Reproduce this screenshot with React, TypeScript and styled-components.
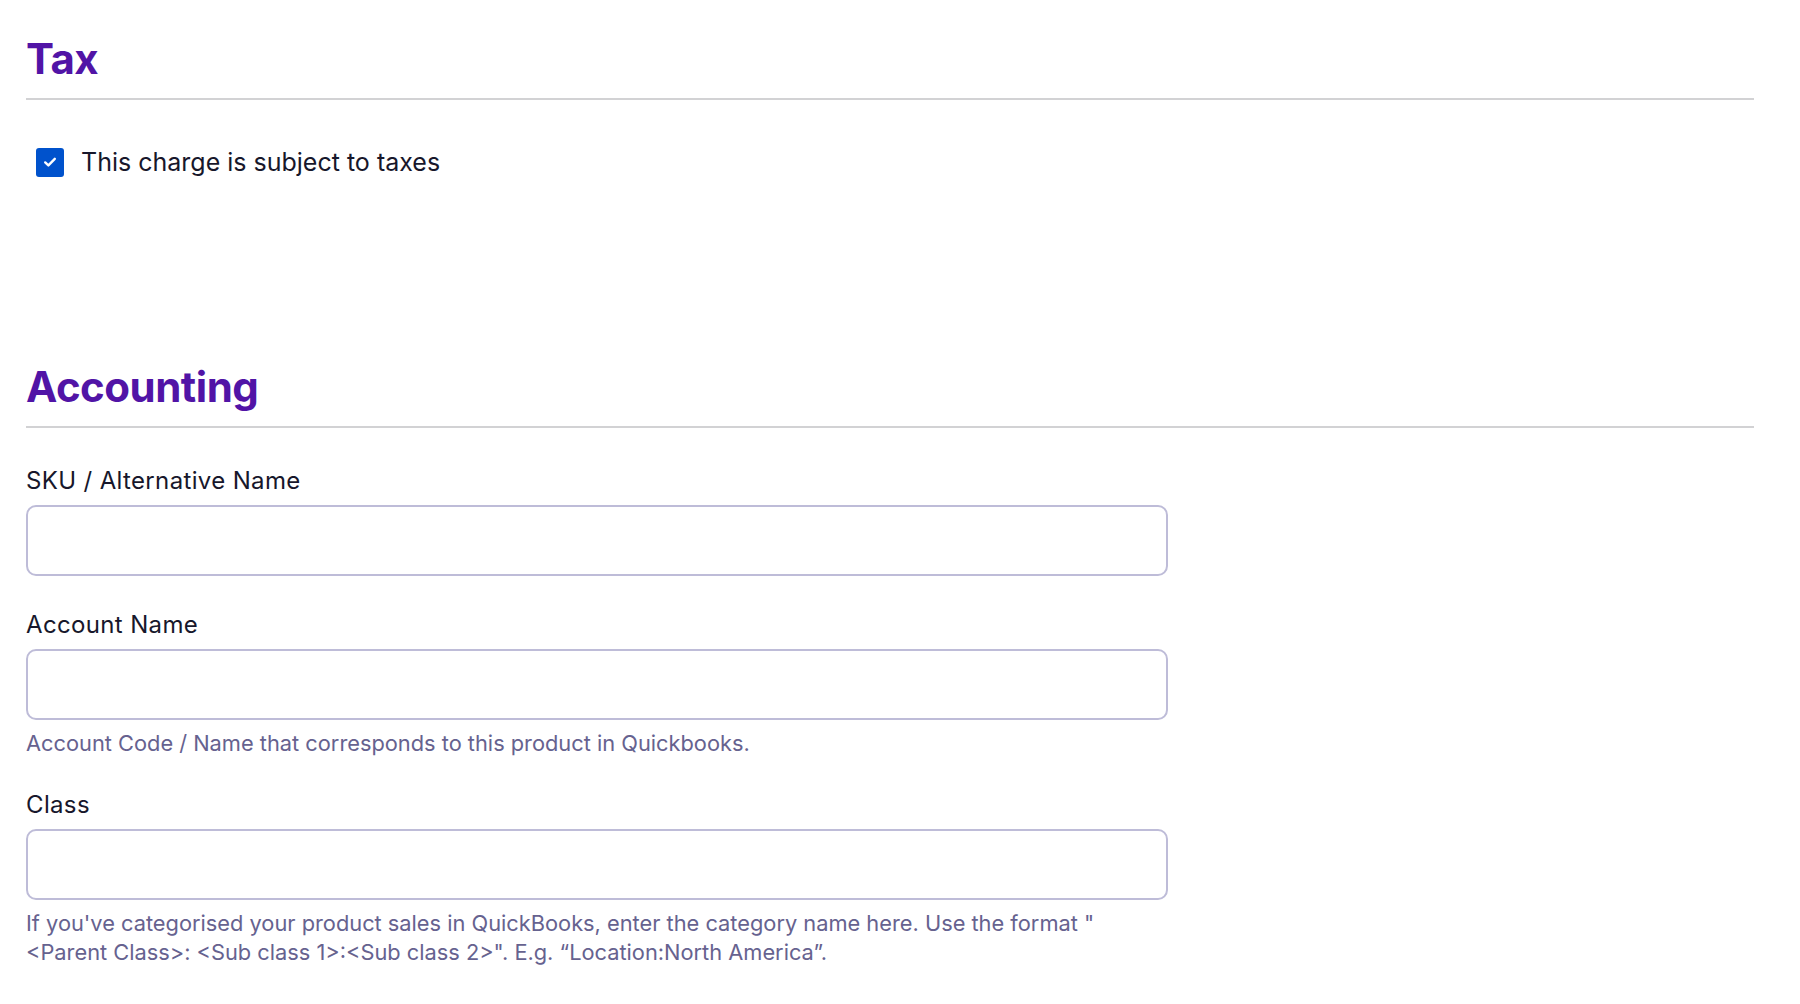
import styled, { createGlobalStyle } from "styled-components";

const GlobalStyle = createGlobalStyle`
  html, body {
    margin: 0;
    padding: 0;
    background: #ffffff;
  }
  body {
    font-family: Inter, "Noto Sans", "Liberation Sans", sans-serif;
    color: #17172b;
  }
`;

const Page = styled.main`
  padding: 32px 46px 40px 26px;
`;

const Section = styled.section<{ $gap?: number }>`
  margin-bottom: ${({ $gap }) => $gap ?? 0}px;
`;

const Heading = styled.h2`
  margin: 0;
  color: #5114a6;
  font-size: 42px;
  font-weight: 700;
  line-height: 53px;
  letter-spacing: -0.5px;
`;

const Divider = styled.hr`
  margin: 13px 0 0;
  border: 0;
  height: 2px;
  background: #d2d2d4;
`;

const CheckRow = styled.label`
  display: flex;
  align-items: center;
  gap: 17px;
  margin: 46px 0 0 10px;
  font-size: 25px;
  line-height: 32px;
  color: #17172b;
`;

const CheckBox = styled.span`
  display: grid;
  place-items: center;
  width: 28px;
  height: 29px;
  border-radius: 3px;
  background: #0052cc;
`;

const Fields = styled.div`
  display: flex;
  flex-direction: column;
  width: 1142px;
  margin-top: 39px;
`;

const Field = styled.div<{ $first?: boolean }>`
  display: flex;
  flex-direction: column;
  margin-top: ${({ $first }) => ($first ? 0 : 35)}px;
`;

const Label = styled.label`
  font-size: 24px;
  line-height: 28px;
  letter-spacing: 0.35px;
  color: #17172b;
`;

const Input = styled.input`
  box-sizing: border-box;
  width: 100%;
  height: 71px;
  margin-top: 10px;
  padding: 0 16px;
  border: 2px solid #bebcd8;
  border-radius: 10px;
  background: #ffffff;
  font: inherit;
  font-size: 23px;
  outline: none;
`;

const Help = styled.p`
  margin: 9px 0 -2px;
  font-size: 21.8px;
  line-height: 29px;
  color: #66628f;
`;

const Check = () => (
  <svg width="16" height="16" viewBox="0 0 16 16" fill="none">
    <path
      d="M3.2 8.4 L6.4 11.4 L12.8 4.8"
      stroke="#ffffff"
      strokeWidth="2.4"
      strokeLinecap="round"
      strokeLinejoin="round"
    />
  </svg>
);

export default function App() {
  return (
    <>
      <GlobalStyle />
      <Page>
        <Section $gap={182}>
          <Heading>Tax</Heading>
          <Divider />
          <CheckRow>
            <CheckBox>
              <Check />
            </CheckBox>
            This charge is subject to taxes
          </CheckRow>
        </Section>

        <Section>
          <Heading>Accounting</Heading>
          <Divider />
          <Fields>
            <Field $first>
              <Label htmlFor="sku">SKU / Alternative Name</Label>
              <Input id="sku" type="text" />
            </Field>
            <Field>
              <Label htmlFor="account">Account Name</Label>
              <Input id="account" type="text" />
              <Help>
                Account Code / Name that corresponds to this product in
                Quickbooks.
              </Help>
            </Field>
            <Field>
              <Label htmlFor="class">Class</Label>
              <Input id="class" type="text" />
              <Help>
                If you've categorised your product sales in QuickBooks, enter
                the category name here. Use the format "
                <br />
                &lt;Parent Class&gt;: &lt;Sub class 1&gt;:&lt;Sub class 2&gt;".
                E.g. “Location:North America”.
              </Help>
            </Field>
          </Fields>
        </Section>
      </Page>
    </>
  );
}
